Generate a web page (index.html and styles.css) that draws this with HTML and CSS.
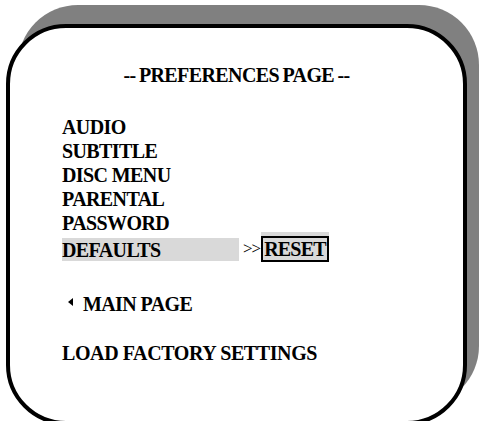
FILE: index.html
```html
<!DOCTYPE html>
<html lang="en">
<head>
    <meta charset="UTF-8">
    <meta name="viewport" content="width=device-width, initial-scale=1.0">
    <title>Preferences Page</title>
    <link rel="stylesheet" href="styles.css">
</head>
<body>
    <div class="screen">
        <h1 class="title">-- PREFERENCES PAGE --</h1>
        <ul class="menu">
            <li>AUDIO</li>
            <li>SUBTITLE</li>
            <li>DISC MENU</li>
            <li>PARENTAL</li>
            <li>PASSWORD</li>
            <li class="row-selected">
                <span class="selected">DEFAULTS</span>
                <span class="arrows">&gt;&gt;</span>
                <span class="reset">RESET</span>
            </li>
        </ul>
        <div class="back">
            <span class="back-arrow"></span>
            <span>MAIN PAGE</span>
        </div>
        <div class="hint">LOAD FACTORY SETTINGS</div>
    </div>
</body>
</html>
```

FILE: styles.css
```css
body {
    margin: 0;
    background: #fff;
    font-family: "Liberation Serif", "Times New Roman", serif;
    font-weight: bold;
    color: #000;
    overflow: hidden;
}
.screen {
    margin: 24px 0 0 6px;
    width: 401px;
    height: 393px;
    padding: 0 0 0 52px;
    border: 4px solid #000;
    border-radius: 60px;
    box-shadow: 12px -19px 0 #808080;
    background: #fff;
}
.title {
    margin: 36px 0 0 -52px;
    font-size: 20px;
    letter-spacing: -0.6px;
    word-spacing: -1px;
    text-align: center;
    line-height: 22px;
}
.menu {
    list-style: none;
    margin: 29px 0 0 0;
    padding: 0;
    font-size: 20px;
    letter-spacing: -0.6px;
    line-height: 24px;
}
.row-selected {
    display: flex;
    align-items: center;
    margin-top: 1px;
}
.selected {
    background: #d9d9d9;
    width: 177px;
    height: 23px;
    line-height: 24px;
}
.arrows {
    font-weight: normal;
    font-size: 17px;
    letter-spacing: -1px;
    margin: 0 1px 0 4px;
}
.reset {
    border: 2px solid #000;
    background: #d9d9d9;
    box-shadow: 0 -4px 0 #d9d9d9;
    padding: 0 1px;
    letter-spacing: -0.8px;
    line-height: 22px;
}
.back {
    display: flex;
    align-items: center;
    margin-top: 31px;
    font-size: 20px;
    letter-spacing: -0.6px;
}
.back-arrow {
    width: 0;
    height: 0;
    border-top: 4px solid transparent;
    border-bottom: 4px solid transparent;
    border-right: 5px solid #000;
    margin: 0 10px 6px 6px;
}
.hint {
    margin-top: 26px;
    font-size: 20px;
    letter-spacing: -0.4px;
}
```
